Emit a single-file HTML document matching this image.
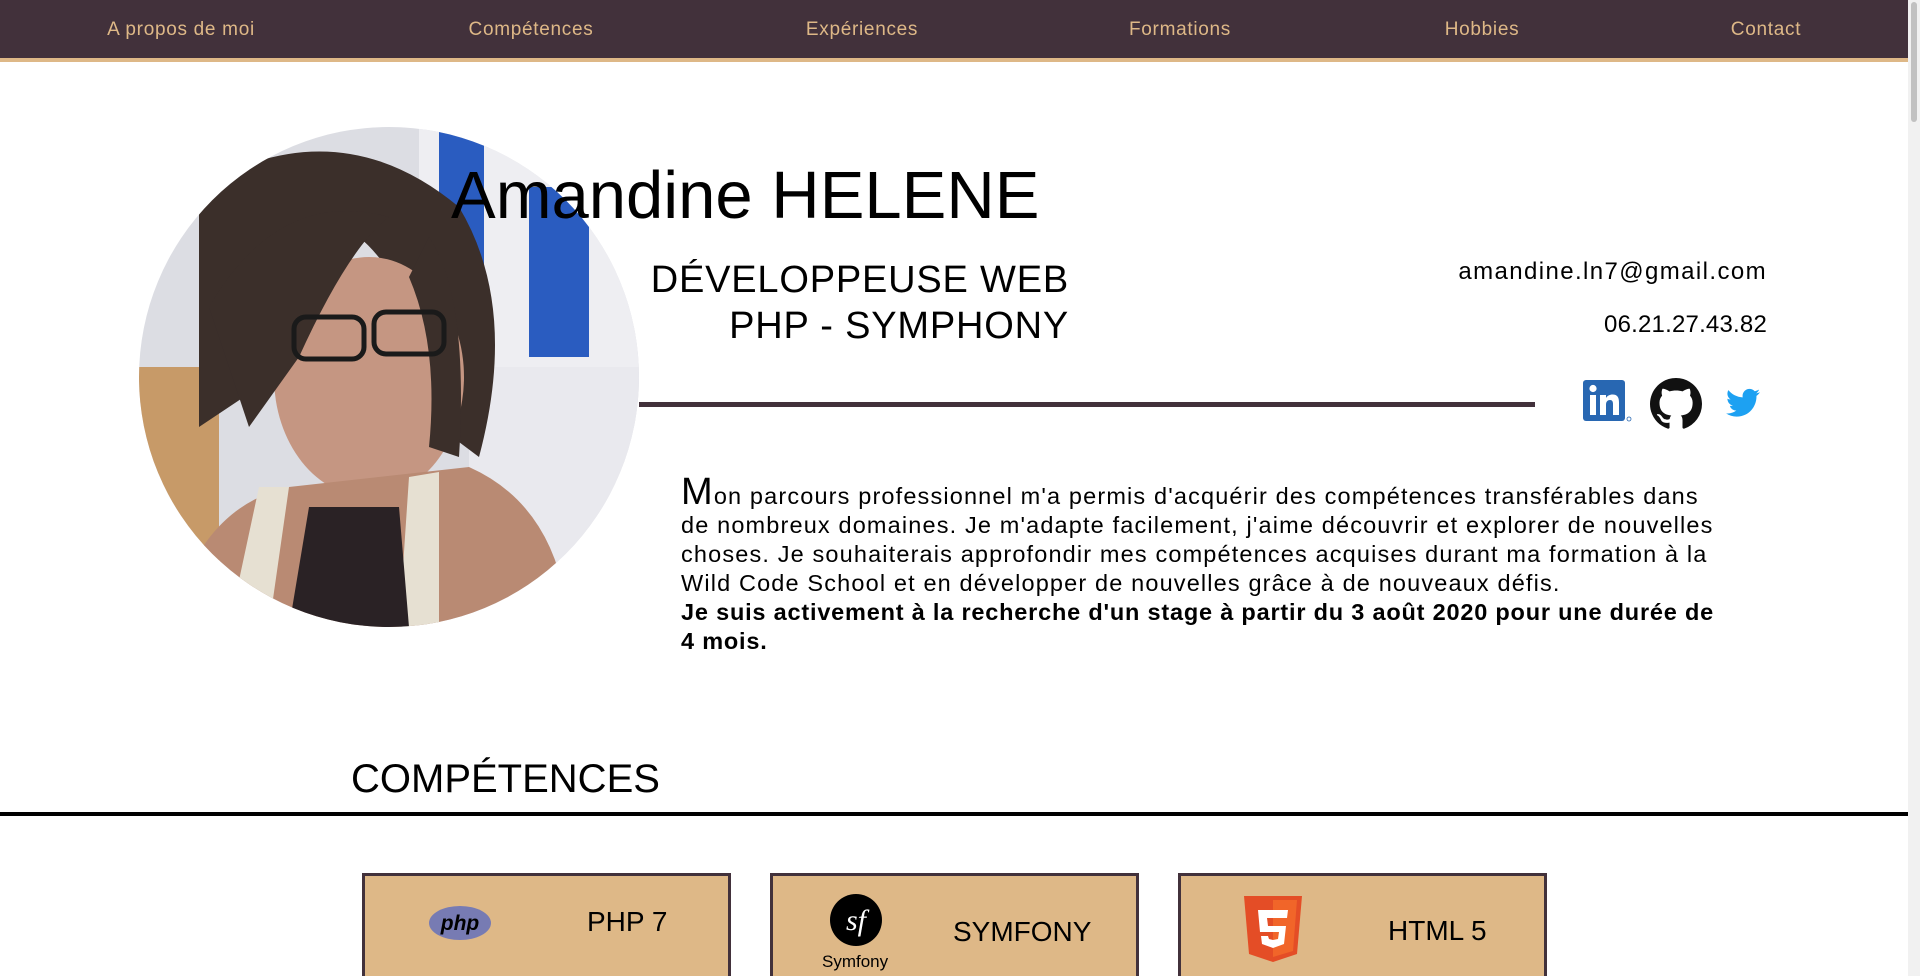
<!DOCTYPE html>
<html><head><meta charset="utf-8"><style>
*{margin:0;padding:0;box-sizing:border-box}
html,body{width:1920px;height:976px;overflow:hidden}
body{background:#fff;font-family:"Liberation Sans",sans-serif;position:relative;color:#000}
.nav{position:absolute;left:0;top:0;width:1908px;background:#42313b;border-bottom:4px solid #deb887;height:62px}
.nav span{position:absolute;top:19px;color:#deb887;font-size:19px;letter-spacing:.7px;transform:translateX(-50%);white-space:nowrap}
.sb{position:absolute;left:1908px;top:0;width:12px;height:976px;background:#f1f1f1}
.sb div{position:absolute;left:3px;top:2px;width:6px;height:120px;background:#c1c1c1;border-radius:3px}
.photo{position:absolute;left:139px;top:127px;width:500px;height:500px;border-radius:50%;overflow:hidden;background:#dcdde3}
.t{position:absolute;white-space:nowrap}
.card{position:absolute;top:873px;width:369px;height:103px;background:#deb887;border:3px solid #42313b;border-bottom:none}
</style></head><body>
<div class="nav">
<span style="left:181px">A propos de moi</span>
<span style="left:531px">Compétences</span>
<span style="left:862px">Expériences</span>
<span style="left:1180px">Formations</span>
<span style="left:1482px">Hobbies</span>
<span style="left:1766px">Contact</span>
</div>
<div class="sb"><div></div></div>
<div class="photo">
<svg width="500" height="500" viewBox="0 0 500 500">
<rect x="280" y="0" width="220" height="240" fill="#eeeef2"/>
<rect x="300" y="0" width="45" height="230" fill="#2a5cc0"/>
<rect x="390" y="60" width="60" height="170" fill="#2a5cc0"/>
<rect x="330" y="240" width="170" height="200" fill="#e9e9ee"/>
<rect x="0" y="240" width="80" height="200" fill="#c79a68"/>
<path d="M60 60 Q200 -20 320 80 Q380 180 340 330 L300 300 Q280 160 220 110 Q150 130 120 260 L60 300 Z" fill="#3b2f2a"/>
<ellipse cx="230" cy="250" rx="95" ry="120" fill="#c59682"/>
<path d="M30 500 Q60 380 150 360 L330 340 Q420 380 430 500 Z" fill="#b98a73"/>
<path d="M90 500 L120 360 L150 360 L130 500 Z M260 500 L270 350 L300 345 L300 500Z" fill="#e6e0d2"/>
<path d="M150 500 L170 380 L260 380 L270 500Z" fill="#2a2225"/>
<path d="M70 180 Q140 60 250 90 Q210 120 160 230 L110 300 Z" fill="#3b2f2a"/>
<path d="M290 110 Q330 170 320 330 L290 320 Q300 220 270 150Z" fill="#3b2f2a"/>
<rect x="155" y="190" width="70" height="42" rx="12" fill="none" stroke="#1a1a1a" stroke-width="5"/>
<rect x="235" y="185" width="70" height="42" rx="12" fill="none" stroke="#1a1a1a" stroke-width="5"/>
</svg>
</div>
<div class="t" style="left:451px;top:156px;font-size:67px;line-height:80px">Amandine HELENE</div>
<div class="t" style="right:851px;top:257px;font-size:38px;line-height:46px;letter-spacing:.8px;text-align:right">DÉVELOPPEUSE WEB<br>PHP - SYMPHONY</div>
<div class="t" style="right:153px;top:258px;font-size:24px;letter-spacing:1.4px">amandine.ln7@gmail.com</div>
<div class="t" style="right:153px;top:311px;font-size:24px;letter-spacing:.2px">06.21.27.43.82</div>
<div style="position:absolute;left:639px;top:402px;width:896px;height:5px;background:#42313b"></div>
<svg style="position:absolute;left:1583px;top:378px" width="52" height="46" viewBox="0 0 52 46">
<rect x="0" y="2" width="42" height="41" rx="3" fill="#2867b2"/>
<rect x="7" y="17" width="6" height="20" fill="#fff"/><circle cx="10" cy="10.5" r="3.6" fill="#fff"/>
<path d="M17 17h6v3c1.5-2.5 4-3.5 6.5-3.5 5 0 6.5 3 6.5 8V37h-6V26c0-2.5-.8-4-3-4s-4 1.5-4 4.5V37h-6z" fill="#fff"/>
<circle cx="46" cy="41" r="2" fill="none" stroke="#2867b2" stroke-width=".8"/></svg>
<svg style="position:absolute;left:1650px;top:378px" width="52" height="52" viewBox="0 0 16 16"><path fill="#111" d="M8 0C3.58 0 0 3.58 0 8c0 3.54 2.29 6.53 5.47 7.59.4.07.55-.17.55-.38 0-.19-.01-.82-.01-1.49-2.01.37-2.53-.49-2.69-.94-.09-.23-.48-.94-.82-1.13-.28-.15-.68-.52-.01-.53.63-.01 1.08.58 1.23.82.72 1.21 1.87.87 2.33.66.07-.52.28-.87.51-1.07-1.78-.2-3.64-.89-3.64-3.95 0-.87.31-1.59.82-2.15-.08-.2-.36-1.02.08-2.12 0 0 .67-.21 2.2.82.64-.18 1.32-.27 2-.27.68 0 1.36.09 2 .27 1.53-1.04 2.2-.82 2.2-.82.44 1.1.16 1.92.08 2.12.51.56.82 1.27.82 2.15 0 3.07-1.87 3.75-3.65 3.95.29.25.54.73.54 1.48 0 1.07-.01 1.93-.01 2.2 0 .21.15.46.55.38A8.013 8.013 0 0016 8c0-4.42-3.58-8-8-8z"/></svg>
<svg style="position:absolute;left:1726px;top:388px" width="34" height="30" viewBox="0 0 24 20"><path fill="#1da1f2" d="M24 2.4c-.9.4-1.8.6-2.8.8 1-.6 1.8-1.6 2.2-2.7-1 .6-2 1-3.1 1.2C19.3.7 18 0 16.6 0c-2.7 0-4.9 2.2-4.9 4.9 0 .4 0 .8.1 1.1C7.7 5.8 4.1 3.9 1.7.9c-.4.7-.7 1.6-.7 2.5 0 1.7.9 3.2 2.2 4.1-.8 0-1.6-.2-2.2-.6v.1c0 2.4 1.7 4.4 3.9 4.8-.4.1-.8.2-1.3.2-.3 0-.6 0-.9-.1.6 2 2.4 3.4 4.6 3.4-1.7 1.3-3.8 2.1-6.1 2.1-.4 0-.8 0-1.2-.1C2.2 18.8 4.8 19.6 7.5 19.6c9.1 0 14-7.5 14-14v-.6c1-.7 1.8-1.6 2.5-2.6z"/></svg>
<div style="position:absolute;left:681px;top:478px;width:1120px;font-size:23.5px;line-height:29px;letter-spacing:1.15px;white-space:nowrap">
<span style="font-size:38px;line-height:29px">M</span>on parcours professionnel m'a permis d'acquérir des compétences transférables dans<br>de nombreux domaines. Je m'adapte facilement, j'aime découvrir et explorer de nouvelles<br>choses. Je souhaiterais approfondir mes compétences acquises durant ma formation à la<br>Wild Code School et en développer de nouvelles grâce à de nouveaux défis.<br><b style="font-weight:600;letter-spacing:.8px">Je suis activement à la recherche d'un stage à partir du 3 août 2020 pour une durée de<br>4 mois.</b></div>
<div class="t" style="left:351px;top:757px;font-size:40px">COMPÉTENCES</div>
<div style="position:absolute;left:0;top:812px;width:1908px;height:4px;background:#000"></div>
<div class="card" style="left:362px">
<svg style="position:absolute;left:63px;top:29px" width="64" height="36" viewBox="0 0 64 36"><ellipse cx="32" cy="18" rx="31" ry="17" fill="#777bb3"/><text x="32" y="25" text-anchor="middle" font-family="Liberation Sans" font-style="italic" font-weight="bold" font-size="21" fill="#000">php</text></svg>
<div class="t" style="left:222px;top:30px;font-size:28px">PHP 7</div></div>
<div class="card" style="left:770px">
<svg style="position:absolute;left:55px;top:16px" width="56" height="56" viewBox="0 0 56 56"><circle cx="28" cy="28" r="26" fill="#000"/><text x="28" y="38" text-anchor="middle" font-family="Liberation Serif" font-style="italic" font-size="30" fill="#fff">sf</text></svg>
<div class="t" style="left:49px;top:76px;font-size:17px">Symfony</div>
<div class="t" style="left:180px;top:40px;font-size:28px">SYMFONY</div></div>
<div class="card" style="left:1178px">
<svg style="position:absolute;left:63px;top:20px" width="58" height="66" viewBox="0 0 58 66"><path d="M0 0h58l-5 58-24 8-24-8z" fill="#e44d26"/><path d="M29 4h24l-4 51-20 6z" fill="#f16529"/><path d="M14 14h30l-1 8H23l1 8h18l-2 18-11 4-11-4-1-8h7l1 3 4 1 5-1 1-7H16z" fill="#fff"/></svg>
<div class="t" style="left:207px;top:39px;font-size:28px">HTML 5</div></div>
</body></html>
